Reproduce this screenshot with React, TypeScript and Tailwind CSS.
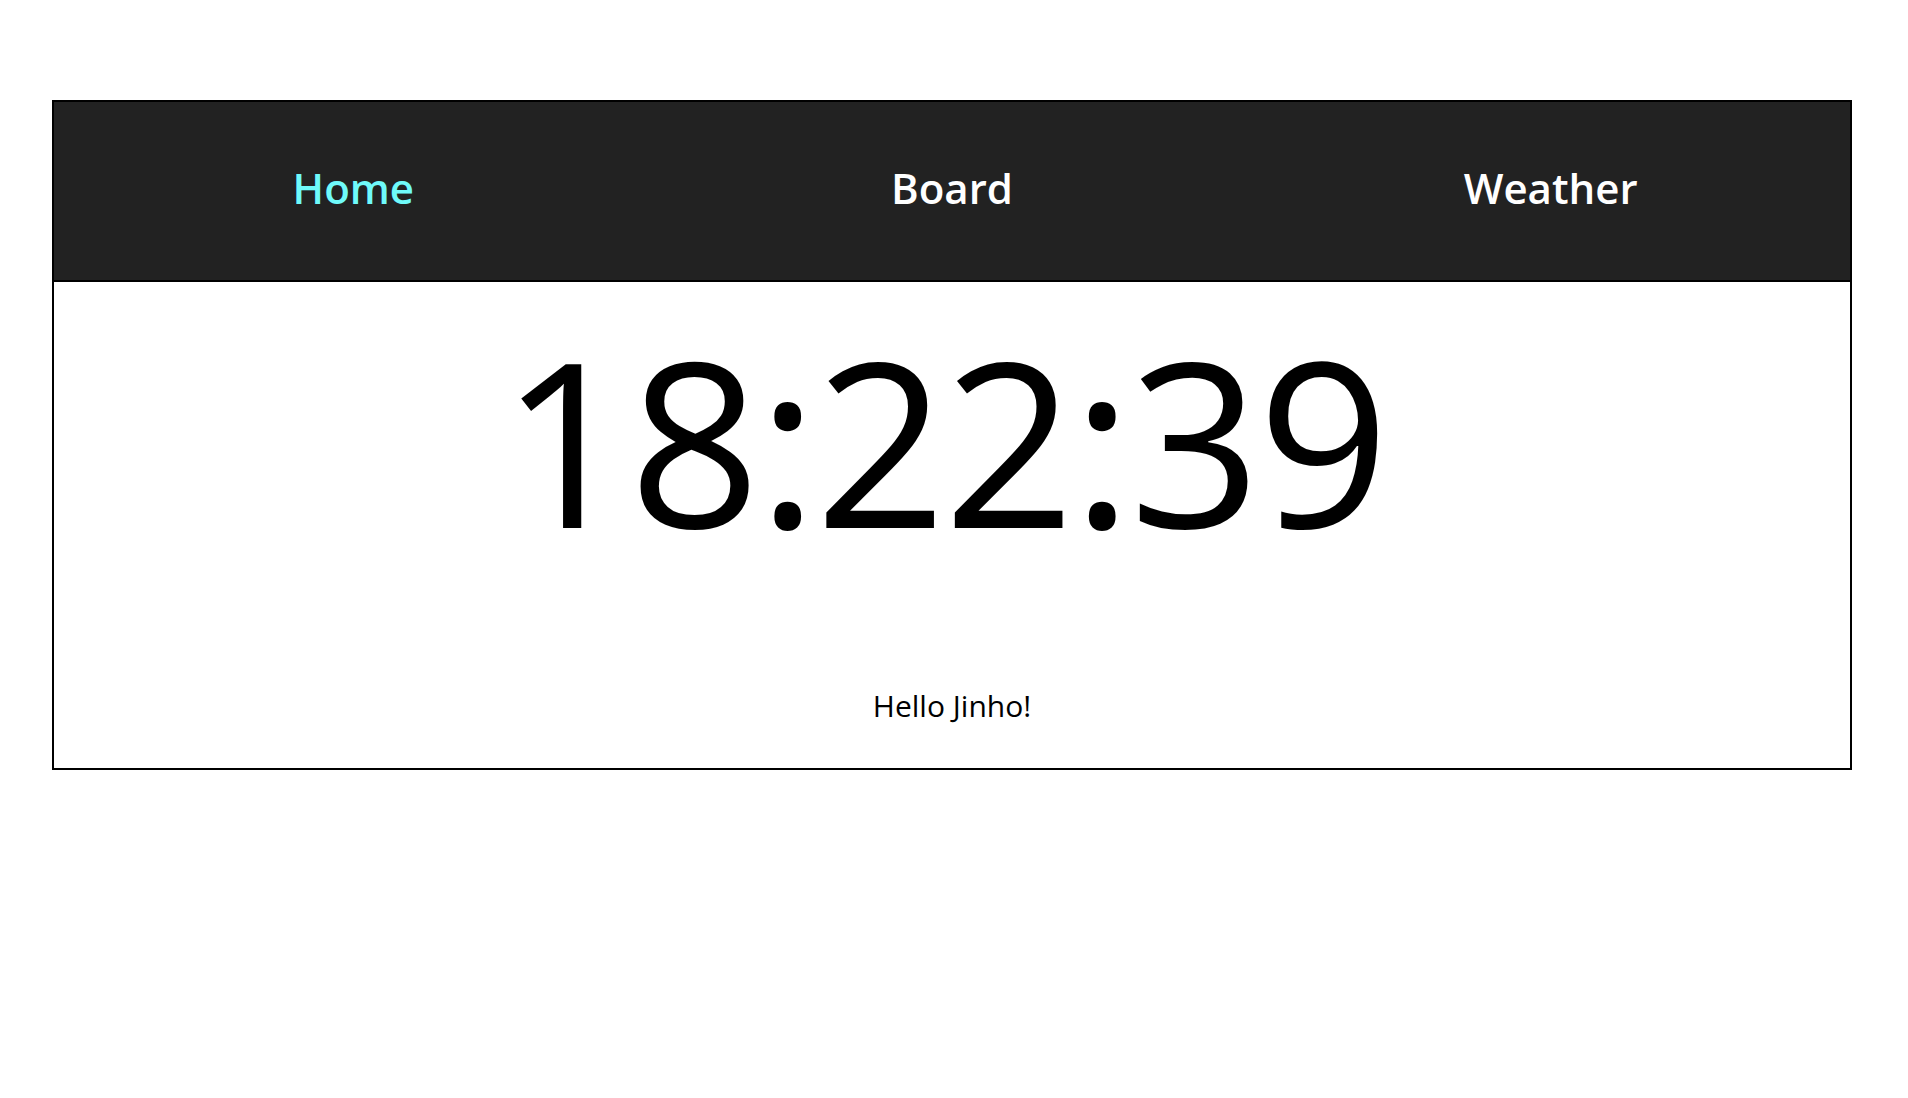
import { useState } from 'react'

const tabs = ['Home', 'Board', 'Weather']

export default function App() {
  const [active, setActive] = useState('Home')

  return (
    <div className="min-h-screen bg-white pt-[100px] font-['Open_Sans','Noto_Sans_CJK_KR',sans-serif]">
      <div className="ml-[52px] w-[1800px] border-2 border-black">
        <nav className="grid h-[180px] grid-cols-3 items-center border-b-2 border-black bg-[#222222]">
          {tabs.map((tab) => (
            <button
              key={tab}
              onClick={() => setActive(tab)}
              className={`pb-[8px] text-center text-[42px] font-semibold ${active === tab ? 'text-[#6ffafa]' : 'text-white'}`}
            >
              {tab}
            </button>
          ))}
        </nav>

        <section className="flex h-[486px] flex-col items-center">
          <h1 className="mt-[42px] pr-[17px] text-[230px] leading-none font-normal tracking-[-3px] text-black">18:22:39</h1>
          <p className="mt-auto mb-[40px] text-[30px] text-black">Hello Jinho!</p>
        </section>
      </div>
    </div>
  )
}
